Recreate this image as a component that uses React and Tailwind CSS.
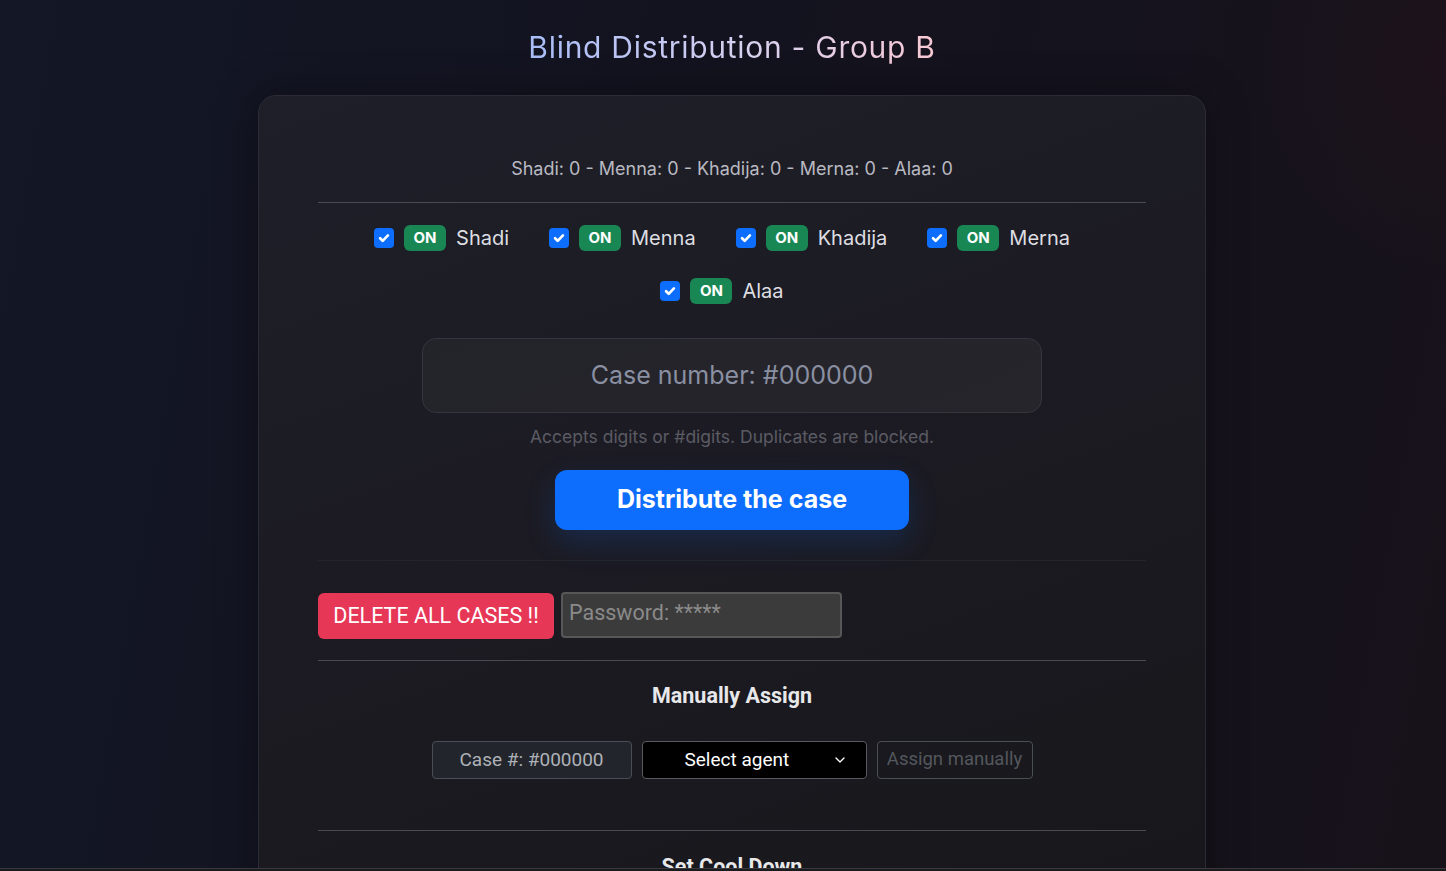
import React, { useState } from 'react';
import { ChevronDown } from 'lucide-react';

const agents = ['Shadi', 'Menna', 'Khadija', 'Merna', 'Alaa'];

function Check() {
    return (
        <span className="flex h-5 w-5 items-center justify-center rounded-[4px] bg-[#0d6efd]">
            <svg viewBox="0 0 16 16" className="h-[14px] w-[14px]" fill="none" stroke="white" strokeWidth="3" strokeLinecap="round" strokeLinejoin="round">
                <path d="M3.5 8.3l3 2.9 6-6.2" />
            </svg>
        </span>
    );
}

export default function App() {
    const [active] = useState(agents.map(() => true));

    return (
        <div className="relative min-h-[871px] overflow-hidden bg-[linear-gradient(100deg,#131726_0%,#13131f_45%,#17121a_100%)] font-['Inter',sans-serif]">
            <div className="pointer-events-none absolute -right-56 -top-36 h-[420px] w-[420px] rounded-full bg-[radial-gradient(circle,rgba(60,20,30,0.2)_0%,rgba(0,0,0,0)_70%)]" />
            <div className="relative flex flex-col items-center pl-[18px] pt-[29px]">
                <h1 className="bg-[linear-gradient(90deg,#a9bdf8,#d9d2f0_55%,#f8c9d4)] bg-clip-text text-[30px] leading-[36px] tracking-[0.72px] text-transparent">
                    Blind Distribution - Group B
                </h1>

                <div className="mt-[30px] w-[948px] rounded-[18px] border border-[#2c2b35] bg-[linear-gradient(160deg,#1e1f28_0%,#1c1b23_45%,#17171b_100%)] px-[59px] pb-10 pt-[61px] shadow-[0_0_40px_rgba(0,0,0,0.35)]">
                    <p className="text-center text-[18px] leading-6 text-[#b9b9c1]">
                        {agents.map((a) => `${a}: 0`).join(' - ')}
                    </p>
                    <div className="mt-[21px] h-px bg-[#4a4a52]" />

                    <div className="mt-[22px] flex flex-wrap justify-center gap-x-5 gap-y-[27px]">
                        {agents.map((a, i) => (
                            <label key={a} className="mr-5 flex h-[26px] items-center">
                                {active[i] && <Check />}
                                <span className="ml-[10px] flex h-[26px] w-[42px] items-center justify-center rounded-[6px] bg-[#198754] text-[15px] font-bold text-white">
                                    ON
                                </span>
                                <span className="ml-[10px] text-[20px] text-[#dedee2]">{a}</span>
                            </label>
                        ))}
                    </div>

                    <div className="mx-auto mt-[34px] flex h-[75px] w-[620px] items-center justify-center rounded-[14px] border border-[#36353d] bg-[linear-gradient(160deg,#23232a,#27252c)] text-[25px] text-[#8a90a2]">
                        Case number: #000000
                    </div>
                    <p className="mt-3 text-center text-[17.5px] leading-6 text-[#5b5b63]">
                        Accepts digits or #digits. Duplicates are blocked.
                    </p>
                    <div className="mt-[21px] flex justify-center">
                        <button className="h-[60px] w-[354px] rounded-[12px] bg-[#0d6efd] text-[25px] font-bold text-white shadow-[0_12px_30px_rgba(13,110,253,0.18)]">
                            Distribute the case
                        </button>
                    </div>

                    <div className="mt-[30px] h-px bg-[#24242a]" />

                    <div className="mt-[31px] flex items-start gap-[7px] font-['Roboto',sans-serif]">
                        <button className="mt-px h-[46px] w-[236px] rounded-[6px] bg-[#e63757] text-[21.5px] text-white">
                            DELETE ALL CASES !!
                        </button>
                        <div className="flex h-[46px] w-[281px] items-center rounded-[4px] border-2 border-[#575757] bg-[#3b3b3b] px-[6px] pb-[3px] text-[21.5px] text-[#8a8a8a]">
                            Password: *****
                        </div>
                    </div>

                    <div className="mt-[21px] h-px bg-[#4a4a52]" />

                    <h2 className="mt-[23px] text-center font-['Roboto',sans-serif] text-[21.5px] font-bold leading-6 text-[#e8e8ea]">
                        Manually Assign
                    </h2>

                    <div className="mt-[33px] flex justify-center gap-[10px] font-['Roboto',sans-serif] text-[19px]">
                        <div className="flex h-[38px] w-[200px] items-center justify-center rounded-[4px] border border-[#4a4f56] bg-[#22252b] text-[#aeb2b8]">
                            Case #: #000000
                        </div>
                        <div className="flex h-[38px] w-[225px] items-center rounded-[4px] border border-[#5a5a5e] bg-black pl-[42px] pr-[18px] text-white">
                            <span className="flex-1">Select agent</span>
                            <ChevronDown size={16} strokeWidth={2} />
                        </div>
                        <div className="flex h-[38px] w-[156px] items-center justify-center rounded-[4px] border border-[#4a4f56] text-[18.5px] text-[#54575d]">
                            Assign manually
                        </div>
                    </div>

                    <div className="mt-[51px] h-px bg-[#4a4a52]" />

                    <h2 className="mt-6 text-center font-['Roboto',sans-serif] text-[21.5px] font-bold leading-6 text-[#e8e8ea]">
                        Set Cool Down
                    </h2>
                </div>
            </div>
            <div className="fixed bottom-0 left-0 right-0 h-[3px] border-t border-[#3a3a3e] bg-[#1a1a1e]" />
        </div>
    );
}
